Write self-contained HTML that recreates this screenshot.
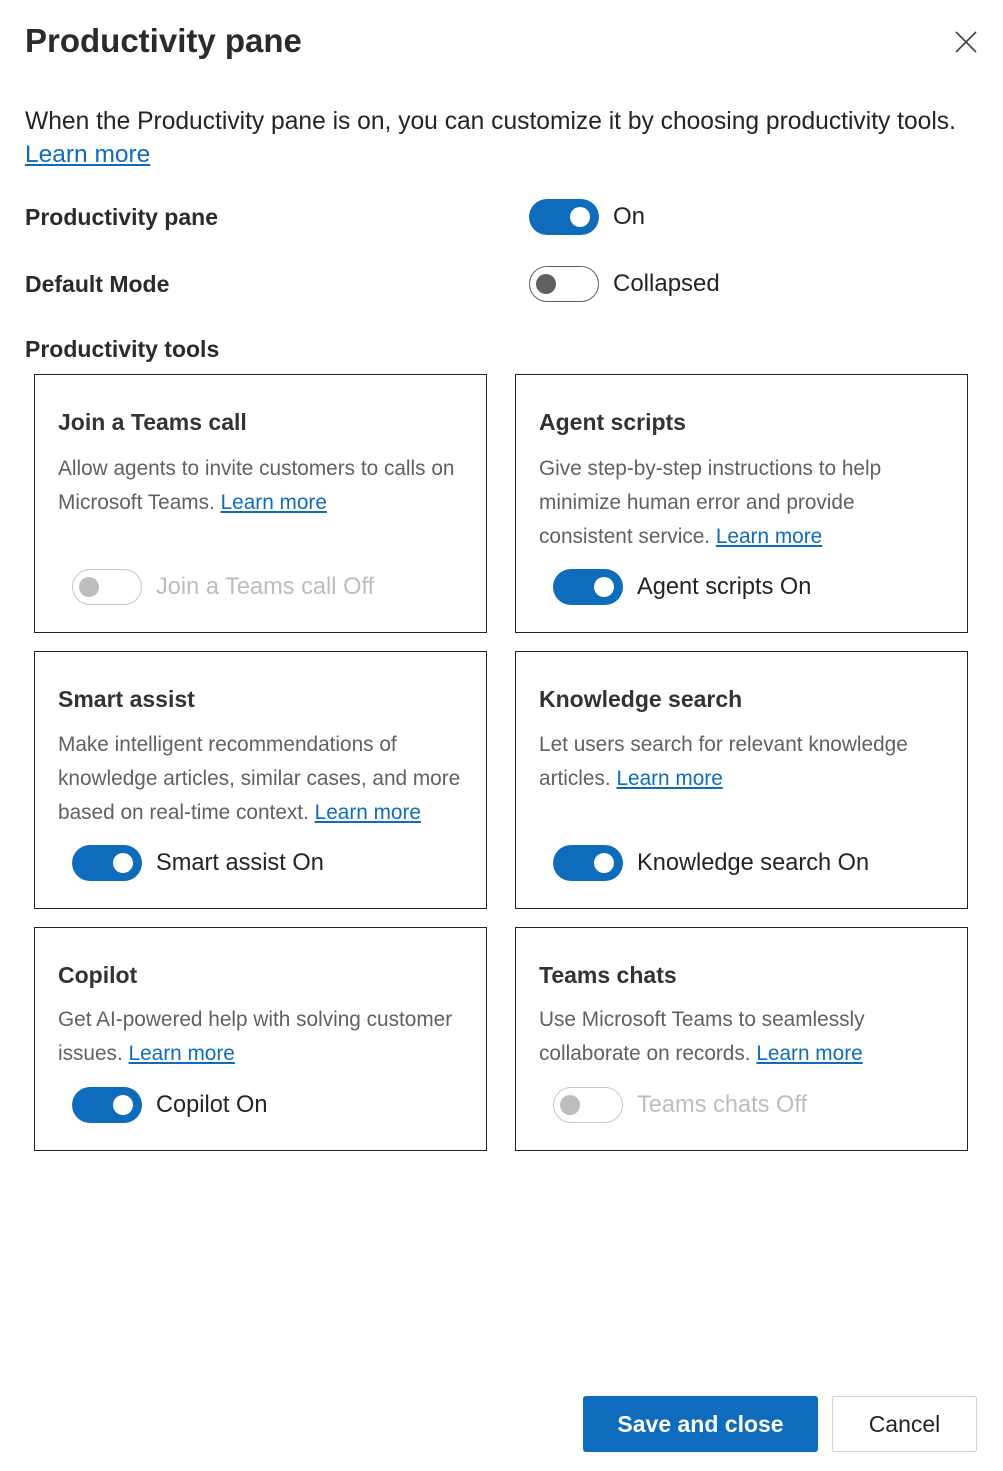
<!DOCTYPE html>
<html><head><meta charset="utf-8"><style>
*{margin:0;padding:0;box-sizing:border-box}
body{width:1003px;height:1471px;background:#fff;font-family:"Liberation Sans",sans-serif;color:#242424;position:relative;overflow:hidden}
.a{position:absolute;white-space:nowrap}
a{color:#0f6cbd;text-decoration:underline}
.card{position:absolute;width:453px;border:1px solid #242424;background:#fff}
.t{position:absolute;left:23px;font-size:23px;line-height:30px;color:#333;font-weight:bold}
.d{position:absolute;left:23px;font-size:20.8px;line-height:34px;color:#616161;white-space:nowrap}
.tg{position:absolute;width:70px;height:36px;border-radius:18px}
.tg.on{background:#0f6cbd}
.tg.on::after{content:"";position:absolute;right:9px;top:8px;width:20px;height:20px;border-radius:50%;background:#fff}
.tg.off{border:1px solid #616161;background:#fff}
.tg.off::after{content:"";position:absolute;left:6px;top:7px;width:20px;height:20px;border-radius:50%;background:#616161}
.tg.dis{border:1px solid #c8c8c8;background:#fff}
.tg.dis::after{content:"";position:absolute;left:6px;top:7px;width:20px;height:20px;border-radius:50%;background:#bdbdbd}
.tl{position:absolute;font-size:23.6px;line-height:30px;white-space:nowrap}
.b{font-weight:bold;color:#2b2b2b}
</style></head><body>
<div class="a b" style="left:25px;top:20px;font-size:33px;line-height:42px">Productivity pane</div>
<svg class="a" style="left:955px;top:31px" width="22" height="22" viewBox="0 0 22 22"><path d="M1 1L21 21M21 1L1 21" stroke="#424242" stroke-width="1.6" fill="none"/></svg>
<div class="a" style="left:25px;top:107px;font-size:24.6px;line-height:30px">When the Productivity pane is on, you can customize it by choosing productivity tools.</div>
<div class="a" style="left:25px;top:140px;font-size:24.5px;line-height:30px"><a>Learn more</a></div>
<div class="a b" style="left:25px;top:202px;font-size:23px;line-height:30px">Productivity pane</div>
<div class="tg on" style="left:529px;top:199px"></div>
<div class="a" style="left:613px;top:202px;font-size:24px;line-height:30px">On</div>
<div class="a b" style="left:25px;top:269px;font-size:23px;line-height:30px">Default Mode</div>
<div class="tg off" style="left:529px;top:266px"></div>
<div class="a" style="left:613px;top:269px;font-size:24px;line-height:30px">Collapsed</div>
<div class="a b" style="left:25px;top:334px;font-size:23px;line-height:30px">Productivity tools</div>

<div class="card" style="left:34px;top:374px;height:259px">
<div class="t" style="top:32px">Join a Teams call</div>
<div class="d" style="top:77px">Allow agents to invite customers to calls on<br>Microsoft Teams. <a>Learn more</a></div>
<div class="tg dis" style="left:37px;top:194px"></div>
<div class="tl" style="left:121px;top:197px;color:#bdbdbd">Join a Teams call Off</div>
</div>
<div class="card" style="left:515px;top:374px;height:259px">
<div class="t" style="top:32px">Agent scripts</div>
<div class="d" style="top:77px">Give step-by-step instructions to help<br>minimize human error and provide<br>consistent service. <a>Learn more</a></div>
<div class="tg on" style="left:37px;top:194px"></div>
<div class="tl" style="left:121px;top:197px">Agent scripts On</div>
</div>

<div class="card" style="left:34px;top:651px;height:258px">
<div class="t" style="top:32px">Smart assist</div>
<div class="d" style="top:76px">Make intelligent recommendations of<br>knowledge articles, similar cases, and more<br>based on real-time context. <a>Learn more</a></div>
<div class="tg on" style="left:37px;top:193px"></div>
<div class="tl" style="left:121px;top:196px">Smart assist On</div>
</div>
<div class="card" style="left:515px;top:651px;height:258px">
<div class="t" style="top:32px">Knowledge search</div>
<div class="d" style="top:76px">Let users search for relevant knowledge<br>articles. <a>Learn more</a></div>
<div class="tg on" style="left:37px;top:193px"></div>
<div class="tl" style="left:121px;top:196px">Knowledge search On</div>
</div>

<div class="card" style="left:34px;top:927px;height:224px">
<div class="t" style="top:32px">Copilot</div>
<div class="d" style="top:75px">Get AI-powered help with solving customer<br>issues. <a>Learn more</a></div>
<div class="tg on" style="left:37px;top:159px"></div>
<div class="tl" style="left:121px;top:162px">Copilot On</div>
</div>
<div class="card" style="left:515px;top:927px;height:224px">
<div class="t" style="top:32px">Teams chats</div>
<div class="d" style="top:75px">Use Microsoft Teams to seamlessly<br>collaborate on records. <a>Learn more</a></div>
<div class="tg dis" style="left:37px;top:159px"></div>
<div class="tl" style="left:121px;top:162px;color:#bdbdbd">Teams chats Off</div>
</div>

<div class="a" style="left:583px;top:1396px;width:235px;height:56px;background:#0f6cbd;border-radius:3px;color:#fff;font-size:23px;font-weight:bold;line-height:56px;text-align:center">Save and close</div>
<div class="a" style="left:832px;top:1396px;width:145px;height:56px;border:1px solid #d1d1d1;border-radius:3px;color:#242424;font-size:23px;line-height:54px;text-align:center">Cancel</div>
</body></html>
